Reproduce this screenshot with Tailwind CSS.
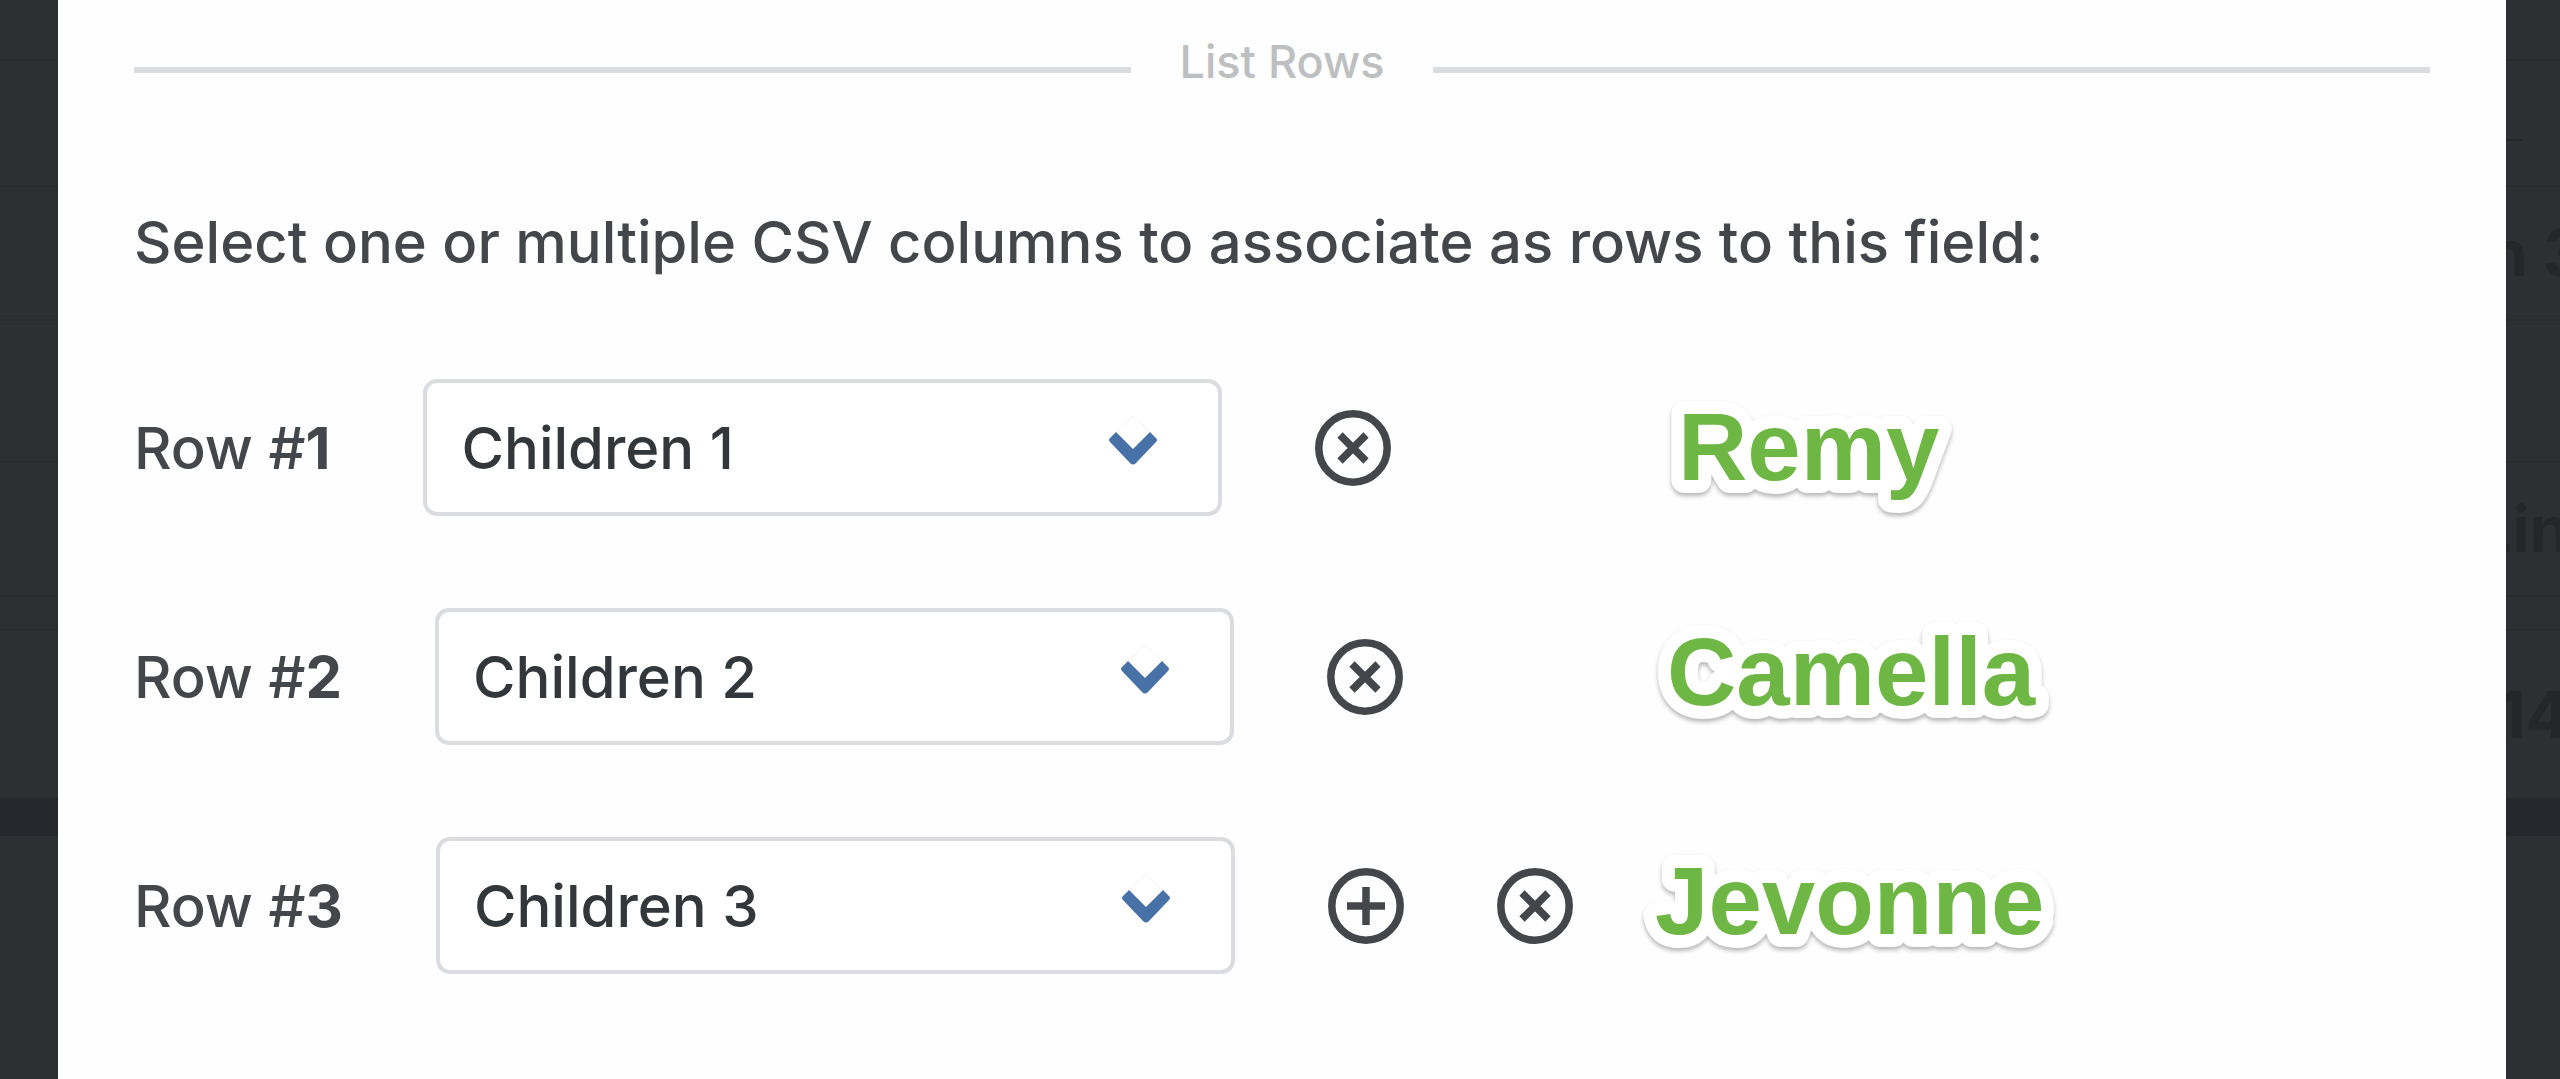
<!DOCTYPE html>
<html lang="en">
<head>
    <meta charset="UTF-8">
    <meta name="viewport" content="width=device-width, initial-scale=1.0">
    <title>List Rows</title>
    <script src="https://cdn.jsdelivr.net/npm/@tailwindcss/browser@4"></script>
    <style>
        body { font-family: 'Inter', 'Liberation Sans', sans-serif; }
        .sticker {
            font-family: 'Liberation Sans', Arial, sans-serif;
            fill: #6eb744;
            stroke: #fff;
            stroke-width: 26px;
            stroke-linejoin: round;
            paint-order: stroke;
            overflow: visible;
            filter: drop-shadow(0 3px 2px rgba(0, 0, 0, 0.28));
        }
    </style>
</head>
<body class="relative min-h-screen overflow-hidden bg-[#2c3033] text-[#43474b]">

    <!-- Dimmed page behind the modal -->
    <div class="absolute inset-0 text-[64px] leading-[80px] font-bold text-[#24262a]" aria-hidden="true">
        <div class="h-[61px] border-b-2 border-[#292c2f]"></div>
        <div class="h-[126px] border-b-2 border-[#292c2f] bg-[#2d3033] flex justify-end">
            <div class="w-[54px]"><div class="w-4 h-20 border-b-2 border-[#24262a]"></div></div>
        </div>
        <div class="h-[134px] border-b-2 border-[#292c2f] bg-[#2d3033] flex items-center justify-end">
            <span class="w-[72px] whitespace-nowrap">n 3</span>
        </div>
        <div class="h-[142px] border-b-2 border-[#292c2f] bg-[#2d3033]"></div>
        <div class="h-[134px] border-b-2 border-[#292c2f] bg-[#2d3033] flex items-center justify-end">
            <span class="w-[84px] whitespace-nowrap">Lin</span>
        </div>
        <div class="h-[34px] border-b-2 border-[#292c2f] bg-[#2d3033]"></div>
        <div class="h-[167px] bg-[#2d3033] flex items-center justify-end">
            <span class="w-[62px] whitespace-nowrap">14</span>
        </div>
        <div class="h-[38px] bg-[#24272b]"></div>
    </div>

    <!-- Modal -->
    <main class="relative ml-[58px] mr-[54px] min-h-screen bg-[#fefefe] px-[76px] pt-8 pb-20">

        <div class="flex items-center gap-[49px]">
            <hr class="flex-1 mt-4 h-[6px] border-0 bg-[#dbdce0]">
            <h2 class="text-[45px] leading-[60px] font-medium text-[#bdbfc1]">List Rows</h2>
            <hr class="flex-1 mt-4 h-[6px] border-0 bg-[#dbdce0]">
        </div>

        <p class="mt-[110px] text-[58px] leading-[80px] font-medium">Select one or multiple CSV columns to associate as rows to this field:</p>

        <form class="mt-[97px] flex flex-col gap-[92px] text-[58px] leading-[80px] font-medium">
            <!-- Row 1 -->
            <div class="flex items-center gap-[93px]">
                <label for="row-1">Row #<b class="font-bold">1</b></label>
                <div class="relative">
                    <select id="row-1" class="appearance-none w-[799px] h-[137px] pl-[34px] border-4 border-[#dbdce0] rounded-[14px] bg-white text-[#32373c]">
                        <option>Children 1</option>
                    </select>
                    <svg class="absolute right-16 top-9 w-[50px] h-[50px] pointer-events-none" viewBox="0 0 50 50" fill="none">
                        <path d="M7 18 L25 1 L43 18" stroke="#f1f1f2" stroke-width="1"/>
                        <path d="M8 17 L25 34 L42 17 L48 23 Q50 25 48 27 L28 48 Q25 51 22 48 L2 27 Q0 25 2 23 Z" fill="#4872a7"/>
                    </svg>
                </div>
                <button type="button" aria-label="Remove row 1">
                    <svg class="block w-[76px] h-[76px]" viewBox="0 0 76 76" fill="none" stroke="#43474b" stroke-width="7.5">
                        <circle cx="38" cy="38" r="34.2"/>
                        <path d="M25 25 L51 51 M51 25 L25 51"/>
                    </svg>
                </button>
            </div>

            <!-- Row 2 -->
            <div class="flex items-center gap-[93px]">
                <label for="row-2">Row #<b class="font-bold">2</b></label>
                <div class="relative">
                    <select id="row-2" class="appearance-none w-[799px] h-[137px] pl-[34px] border-4 border-[#dbdce0] rounded-[14px] bg-white text-[#32373c]">
                        <option>Children 2</option>
                    </select>
                    <svg class="absolute right-16 top-9 w-[50px] h-[50px] pointer-events-none" viewBox="0 0 50 50" fill="none">
                        <path d="M7 18 L25 1 L43 18" stroke="#f1f1f2" stroke-width="1"/>
                        <path d="M8 17 L25 34 L42 17 L48 23 Q50 25 48 27 L28 48 Q25 51 22 48 L2 27 Q0 25 2 23 Z" fill="#4872a7"/>
                    </svg>
                </div>
                <button type="button" aria-label="Remove row 2">
                    <svg class="block w-[76px] h-[76px]" viewBox="0 0 76 76" fill="none" stroke="#43474b" stroke-width="7.5">
                        <circle cx="38" cy="38" r="34.2"/>
                        <path d="M25 25 L51 51 M51 25 L25 51"/>
                    </svg>
                </button>
            </div>

            <!-- Row 3 -->
            <div class="flex items-center gap-[93px]">
                <label for="row-3">Row #<b class="font-bold">3</b></label>
                <div class="relative">
                    <select id="row-3" class="appearance-none w-[799px] h-[137px] pl-[34px] border-4 border-[#dbdce0] rounded-[14px] bg-white text-[#32373c]">
                        <option>Children 3</option>
                    </select>
                    <svg class="absolute right-16 top-9 w-[50px] h-[50px] pointer-events-none" viewBox="0 0 50 50" fill="none">
                        <path d="M7 18 L25 1 L43 18" stroke="#f1f1f2" stroke-width="1"/>
                        <path d="M8 17 L25 34 L42 17 L48 23 Q50 25 48 27 L28 48 Q25 51 22 48 L2 27 Q0 25 2 23 Z" fill="#4872a7"/>
                    </svg>
                </div>
                <button type="button" aria-label="Add row">
                    <svg class="block w-[76px] h-[76px]" viewBox="0 0 76 76" fill="none" stroke="#43474b" stroke-width="7.5">
                        <circle cx="38" cy="38" r="34.2"/>
                        <path d="M38 19 V57 M19 38 H57"/>
                    </svg>
                </button>
                <button type="button" aria-label="Remove row 3">
                    <svg class="block w-[76px] h-[76px]" viewBox="0 0 76 76" fill="none" stroke="#43474b" stroke-width="7.5">
                        <circle cx="38" cy="38" r="34.2"/>
                        <path d="M25 25 L51 51 M51 25 L25 51"/>
                    </svg>
                </button>
            </div>
        </form>

        <!-- Callouts -->
        <svg class="sticker absolute left-[1620px] top-[399px] w-[270px] h-24 text-[96px] font-bold"><text x="0" y="81">Remy</text></svg>
        <svg class="sticker absolute left-[1609px] top-[624px] w-[380px] h-24 text-[96px] font-bold"><text x="0" y="81">Camella</text></svg>
        <svg class="sticker absolute left-[1597px] top-[853px] w-[400px] h-24 text-[96px] font-bold"><text x="0" y="81">Jevonne</text></svg>
    </main>
</body>
</html>
